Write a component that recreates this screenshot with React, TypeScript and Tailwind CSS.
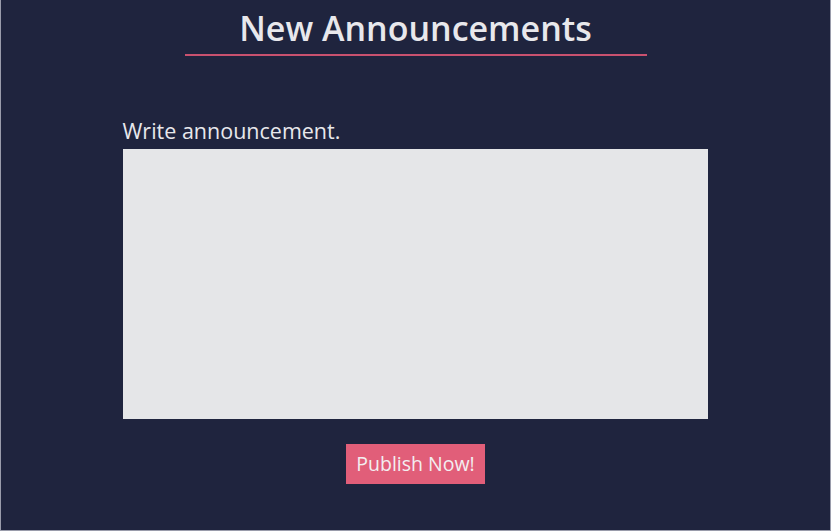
export default function App() {
  return (
    <div
      className="flex h-[531px] w-[831px] flex-col items-center border-x border-b border-[#9a9cab] bg-[#1f243e] text-[#e8e8ec]"
      style={{ fontFamily: '"Open Sans", "Noto Sans", sans-serif' }}
    >
      {/* Title */}
      <h1 className="mt-[8px] w-[462px] border-b-2 border-[#c9516f] pb-[6px] text-center text-[34px] font-semibold leading-[40px]">
        New Announcements
      </h1>

      {/* Form */}
      <div className="mt-[62px] flex w-[586px] flex-col pr-[1px]">
        <label className="text-[21.5px] leading-[26px]">Write announcement.</label>
        <textarea className="mt-[5px] h-[270px] w-full resize-none bg-[#e5e6e8] p-2 text-black outline-none" />
      </div>

      <button className="mt-[25px] h-[40px] w-[139px] bg-[#e15e79] text-[19.5px] text-[#f3eef0]">
        Publish Now!
      </button>
    </div>
  );
}
